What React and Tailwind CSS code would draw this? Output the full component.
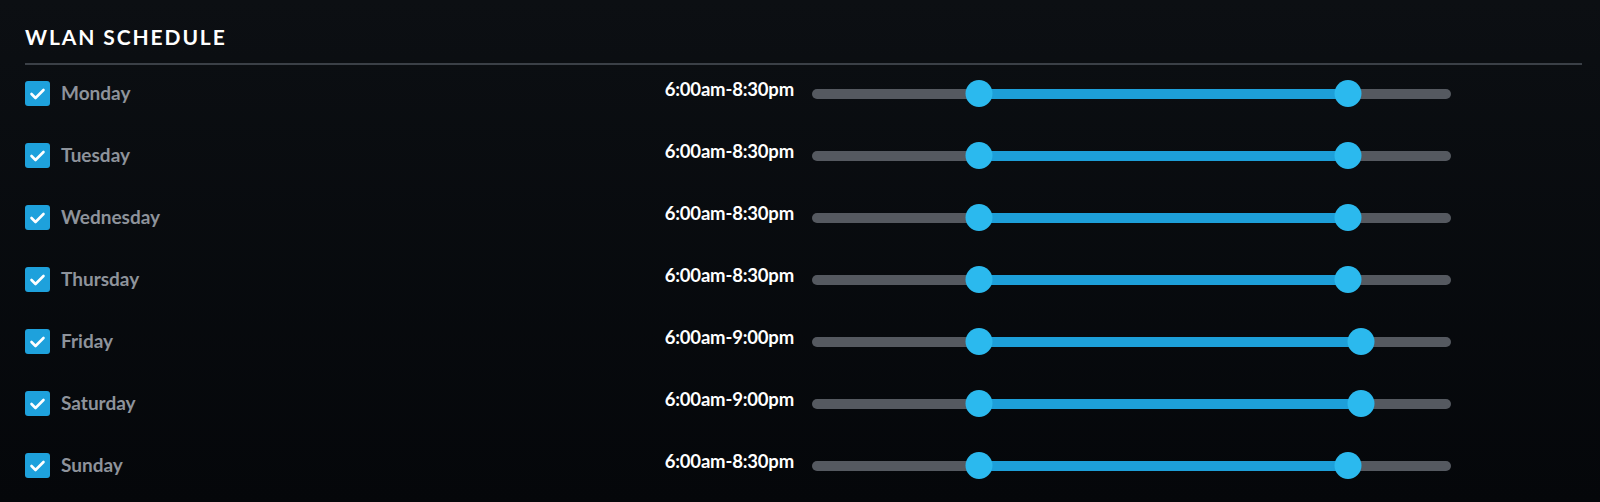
import React from "react";

const days = [
  { name: "Monday", start: 6, end: 20.5, label: "6:00am-8:30pm" },
  { name: "Tuesday", start: 6, end: 20.5, label: "6:00am-8:30pm" },
  { name: "Wednesday", start: 6, end: 20.5, label: "6:00am-8:30pm" },
  { name: "Thursday", start: 6, end: 20.5, label: "6:00am-8:30pm" },
  { name: "Friday", start: 6, end: 21, label: "6:00am-9:00pm" },
  { name: "Saturday", start: 6, end: 21, label: "6:00am-9:00pm" },
  { name: "Sunday", start: 6, end: 20.5, label: "6:00am-8:30pm" },
];

// slider is 639px wide, thumbs are 27px, so 612px covers 24h
const hourToPx = (h) => 13.5 + (h * 612) / 24;

const Checkbox = () => (
  <div className="flex h-[25px] w-[25px] shrink-0 items-center justify-center rounded-[3px] bg-[#1ea1dc]">
    <svg width="25" height="25" viewBox="0 0 25 25" fill="none">
      <path
        d="M6.5 13 L10.5 17 L18.5 9"
        stroke="white"
        strokeWidth="2.6"
        strokeLinecap="round"
        strokeLinejoin="round"
      />
    </svg>
  </div>
);

const RangeSlider = ({ start, end }) => {
  const a = hourToPx(start);
  const b = hourToPx(end);
  return (
    <div className="relative h-[27px] w-[639px] shrink-0">
      {/* Track */}
      <div className="absolute inset-x-0 top-1/2 h-[10px] -translate-y-1/2 rounded-full bg-[#555960]" />
      {/* Selected range */}
      <div
        className="absolute top-1/2 h-[10px] -translate-y-1/2 bg-[#1d9fd9]"
        style={{ left: a, width: b - a }}
      />
      {/* Thumbs */}
      <div
        className="absolute top-0 h-[27px] w-[27px] -translate-x-1/2 rounded-full bg-[#2bb9ee]"
        style={{ left: a }}
      />
      <div
        className="absolute top-0 h-[27px] w-[27px] -translate-x-1/2 rounded-full bg-[#2bb9ee]"
        style={{ left: b }}
      />
    </div>
  );
};

export default function App() {
  return (
    <div
      className="h-[502px] w-[1600px] overflow-hidden bg-gradient-to-b from-[#0c0f13] to-[#05070a] pl-[25px] pr-[18px]"
      style={{ fontFamily: "Lato, 'Open Sans', sans-serif" }}
    >
      {/* Header */}
      <div className="pt-[24px] pb-[13px]">
        <h1 className="text-[21px] font-bold leading-[26px] tracking-[0.09em] text-white">
          WLAN SCHEDULE
        </h1>
      </div>
      <div className="h-[2px] bg-[#3b4047]" />

      {/* Rows */}
      <div className="flex flex-col">
        {days.map((day) => (
          <div key={day.name} className="flex h-[62px] items-center pb-[5px]">
            <div className="flex w-[609px] items-center gap-[11px]">
              <Checkbox />
              <span className="text-[19px] font-bold text-[#8e939b]">{day.name}</span>
            </div>
            <div className="w-[160px] whitespace-nowrap pb-[8px] text-right text-[18.5px] font-bold tracking-[-0.01em] text-white">
              {day.label}
            </div>
            <div className="ml-[18px] mr-[131px]">
              <RangeSlider start={day.start} end={day.end} />
            </div>
          </div>
        ))}
      </div>
    </div>
  );
}
